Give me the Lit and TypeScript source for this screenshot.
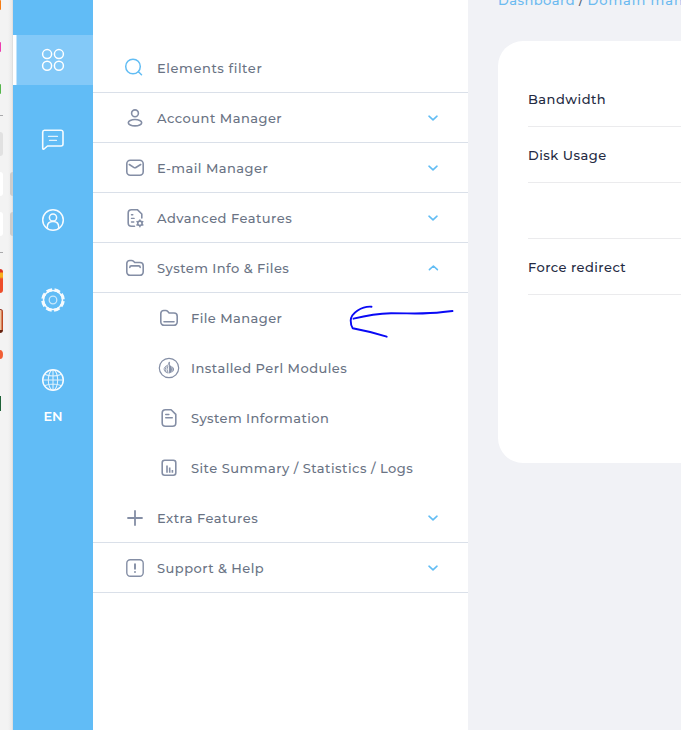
import { LitElement, html, svg, css } from "lit";
import { customElement, property } from "lit/decorators.js";

/** Text run whose tracking is adjusted so that it occupies a given width. */
@customElement("fit-label")
class FitLabel extends LitElement {
  @property() text = "";
  @property({ type: Number }) width = 0;
  static styles = css`
    :host { display: inline-block; white-space: pre; }
  `;
  render() {
    return html`<span>${this.text}</span>`;
  }
  updated() {
    const span = this.renderRoot.querySelector("span")!;
    span.style.letterSpacing = "0px";
    const natural = span.getBoundingClientRect().width;
    span.style.letterSpacing = `${(this.width - natural) / this.text.length}px`;
  }
}

const icons: Record<string, unknown> = {
  grid: svg`<g stroke-width="1.5"><circle cx="6.1" cy="6.1" r="4.5"/><circle cx="17.9" cy="6.1" r="4.5"/><circle cx="6.1" cy="17.7" r="4.5"/><circle cx="17.9" cy="17.7" r="4.5"/></g>`,
  chat: svg`<path stroke-width="1.6" d="M3.5 2.2H20a2 2 0 0 1 2 2V16a2 2 0 0 1-2 2H6.5L3 21q-1.3.5-1.3-1V4.200a2 2 0 0 1 1.8-2z"/><path stroke-width="1.3" opacity=".85" d="M7.500 8.400h9M8.500 12.400h7"/>`,
  user: svg`<g stroke-width="1.5"><circle cx="12" cy="12" r="10.300"/><circle cx="12" cy="9.500" r="3.600"/><path d="M6.300 20.300V19c0-3.400 2.200-5.600 5.700-5.600s5.700 2.200 5.700 5.600v1.300"/></g>`,
  gear: svg`<circle cx="12" cy="12" r="9.500" stroke-width="1.600"/><circle cx="12" cy="12" r="10.300" stroke-width="3" stroke-linecap="butt" stroke-dasharray="5.700 2.390" stroke-dashoffset="-1.195"/><circle cx="12" cy="12" r="3.800" stroke-width="1.300" opacity=".7"/>`,
  globe: svg`<circle cx="12" cy="12" r="10.300" stroke-width="1.500"/><g stroke-width="1.100" opacity=".85"><ellipse cx="12" cy="12" rx="4.700" ry="10.300"/><path d="M1.700 12h20.600M4 6.500q8 3 16 0M4 17.500q8-3 16 0M12 2v20" /></g>`,
  search: svg`<circle cx="10" cy="10.500" r="7.300" stroke-width="1.500"/><path stroke-width="1.500" d="m15.500 15.800 3 3"/>`,
  person: svg`<circle cx="12" cy="7.300" r="3.400"/><ellipse cx="12" cy="16.700" rx="6.700" ry="3.200"/>`,
  mail: svg`<rect x="3.800" y="4.300" width="16.400" height="15" rx="3.500"/><path d="m6.300 8.500 4.400 2.800q1.300.8 2.600 0l4.400-2.800"/>`,
  docgear: svg`<path d="M11.500 20.300H8.500a3.300 3.300 0 0 1-3.300-3.300V7a3.300 3.300 0 0 1 3.300-3.300h5.800l4.500 4.300v4"/><path d="M8.500 8.800h1.300M8.500 12.400h2.600M8.500 16h2.300" stroke-width="1.400"/><circle cx="16.900" cy="17.300" r="2.200" stroke-width="1.600"/><path stroke-width="1.500" d="M16.900 13.900v1M16.900 19.700v1M14 15.600l.8.500M19 18.500l.8.500M14 19l.8-.5M19 16.100l.8-.5"/>`,
  folder: svg`<path d="M3.800 16V7.500a3 3 0 0 1 3-3h1.700q1.200 0 2 .8l1.200 1.200h5.300a3.200 3.200 0 0 1 3.200 3.200V16a3.300 3.300 0 0 1-3.300 3.300H7.100A3.300 3.300 0 0 1 3.800 16z"/><path d="M6.800 11.500q0-1.600 1.500-1.600h7.400q1.500 0 1.500 1.600"/>`,
  folder2: svg`<path d="M3.800 16V7.500a3 3 0 0 1 3-3h2q1.100 0 1.800.8l1.500 1.700h4.900a3.200 3.200 0 0 1 3.200 3.200V16a3.300 3.300 0 0 1-3.300 3.300H7.100A3.300 3.300 0 0 1 3.800 16z"/><path d="M7 15.800h10"/>`,
  perl: svg`<circle cx="12" cy="12" r="9.700" stroke-width="1.200"/><path stroke-width=".9" d="M12.200 6.300q-.6 2.400-1.800 3.200C5.400 11 6.500 16.500 11 17M12.400 6.300v10.700M10.800 10q-1.800 3.400 0 6.300M9 10.900q-1.800 2.400 0 5"/><path fill="currentColor" stroke="none" d="M12.400 8.300q.8 1.500 2.200 2c4 1.600 3.200 6.200-2.200 6.800z"/><path stroke="#fff" stroke-width=".5" d="M14.800 10.500q1.300 3 0 6"/>`,
  doc: svg`<path d="M8.500 3.800h5.600l4.700 4.600V17a3.300 3.300 0 0 1-3.300 3.300h-7A3.300 3.300 0 0 1 5.200 17V7.100a3.300 3.300 0 0 1 3.300-3.300z"/><path d="M8.700 8.500h3.200M8.700 11.800h6.600" stroke-width="1.400"/>`,
  chart: svg`<rect x="5.200" y="4.300" width="13.600" height="15" rx="2.500"/><path stroke-linecap="butt" d="M10 9.600v7.200M12.700 11.400v5.400M15.400 14v2.800"/>`,
  plus: svg`<path stroke-width="1.800" d="M12 5v14M5 12h14"/>`,
  alert: svg`<rect x="3.800" y="3.800" width="16.400" height="16.400" rx="3.500" stroke-width="1.400"/><path stroke-width="1.900" d="M12 8.300v4.500M12 15.900v.1"/>`,
  down: svg`<path stroke-width="1.600" d="m8 10.200 4 3.700 4-3.700"/>`,
  up: svg`<path stroke-width="1.600" d="m8.400 13.700 4-3.700 4 3.700"/>`,
};

const icon = (name: string, cls = "") =>
  html`<svg class="icon ${cls}" viewBox="0 0 24 24" fill="none" stroke="currentColor"
    stroke-width="1.6" stroke-linecap="round" stroke-linejoin="round">${icons[name]}</svg>`;

interface Item { icon: string; text: string; width: number; chevron?: string; sub?: boolean; }

const menu: Item[] = [
  { icon: "search", text: "Elements filter", width: 105.3 },
  { icon: "person", text: "Account Manager", width: 125.2 },
  { icon: "mail", text: "E-mail Manager", width: 111.2 },
  { icon: "docgear", text: "Advanced Features", width: 135.2 },
  { icon: "folder", text: "System Info & Files", width: 132.3, chevron: "up" },
  { icon: "folder2", text: "File Manager", width: 91.4, sub: true },
  { icon: "perl", text: "Installed Perl Modules", width: 156.3, sub: true },
  { icon: "doc", text: "System Information", width: 138.3, sub: true },
  { icon: "chart", text: "Site Summary / Statistics / Logs", width: 222.2, sub: true },
  { icon: "plus", text: "Extra Features", width: 101.2 },
  { icon: "alert", text: "Support & Help", width: 107.2 },
].map((m) => (m.sub || m.icon === "search" || m.chevron ? m : { ...m, chevron: "down" }));

const details = [
  { text: "Bandwidth", width: 78.2 },
  { text: "Disk Usage", width: 78.6 },
  { text: "", width: 0 },
  { text: "Force redirect", width: 98.2 },
];

@customElement("app-root")
class AppRoot extends LitElement {
  static styles = css`
    :host {
      display: flex; position: relative; width: 681px; height: 730px; overflow: hidden;
      background: #f1f2f6; color: #6a7384;
      font: 500 13px/20px Montserrat, Inter, "Liberation Sans", sans-serif;
    }
    .icon { width: 24px; height: 24px; flex: none; display: block; }
    .edge {
      width: 13px; flex: none; display: flex; justify-content: space-between;
      background: linear-gradient(90deg, #f3f3f3 8px, #e9e9e9 12px, #d4d5d6 13px);
    }
    .marks, .tabs { display: flex; flex-direction: column; width: 3px; }
    .marks div { flex: none; }
    .dot { width: 1px; height: 10px; border-radius: 0 1px 1px 0; }
    .orange { background: #f57c14; }
    .pink { margin-top: 32px; background: #ed3daf; }
    .green { margin-top: 32px; background: #55b64c; }
    .rule { height: 1px; background: #a9a9ab; }
    .r1 { margin-top: 21px; }
    .r2 { margin-top: 16px; }
    .tile { height: 24px; border-radius: 0 3px 3px 0; }
    .grey { margin-top: 16px; background: #e1e1e1; }
    .white { margin-top: 16px; background: #fff; }
    .red { margin-top: 16px; background: linear-gradient(#df3522 0 3px, #f8ae20 4px 8px, #ee4e2b 10px); }
    .brown { margin-top: 16px; background: linear-gradient(90deg, #efc5a0 0 1px, #bd4821 2px); border-top: 1px solid #8f2917; border-bottom: 3px solid #65220f; box-sizing: border-box; }
    .ball { margin-top: 17px; height: 9px; border-radius: 0 3px 3px 0 / 0 4.5px 4.5px 0; background: #f15e35; }
    .leaf { margin-top: 37px; height: 15px; width: 1px; background: #1e6238; }
    .tabs { gap: 16px; padding-top: 172px; }
    .tab { height: 24px; background: #cdcdcd; border-radius: 3px 0 0 3px; }

    .rail {
      width: 80px; flex: none; background: #61bcf6; color: #fff; padding-top: 35px;
      box-sizing: border-box; display: flex; flex-direction: column; align-items: center; gap: 30px;
    }
    .slot { height: 50px; width: 80px; display: flex; align-items: center; justify-content: center; opacity: .95; }
    .active {
      background: linear-gradient(90deg, #fff 3px, #c0e3fc 3px 4px, #83c9f8 4px); opacity: 1;
    }
    .lang { font-weight: 600; margin-top: -30px; line-height: 22px; }

    .panel { width: 375px; flex: none; background: #fff; padding-top: 43px; box-sizing: border-box; }
    .row {
      height: 50px; box-sizing: border-box; border-bottom: 1px solid #dae0e9;
      padding: 1px 23px 0 30px; display: flex; align-items: center;
    }
    .row .icon { color: #848ea5; }
    .row .icon.search, .row .icon.chev { color: #62bdf4; }
    .row fit-label { margin-left: 10px; }
    .sub { border-color: transparent; padding-left: 64px; }
    .row .chev { margin-left: auto; }

    .main { flex: 1; min-width: 0; padding-left: 30px; }
    .crumbs { height: 41px; margin-top: -10px; padding-bottom: 10px; white-space: nowrap; color: #6cbaf0; display: flex; gap: 4px; }
    .sep { color: #596173; width: 6px; }
    .card { height: 422px; box-sizing: border-box; width: 240px; background: #fff; border-radius: 25px; padding: 30px 0 0 30px; }
    .line { height: 56px; box-sizing: border-box; border-bottom: 1px solid #ebebed; display: flex; align-items: center; padding-top: 1px; color: #242a42; }

    .arrow { position: absolute; left: 345px; top: 300px; width: 115px; height: 42px; }
  `;

  render() {
    return html`
      <div class="edge">
        <div class="marks">
          <div class="dot orange"></div><div class="dot pink"></div><div class="dot green"></div>
          <div class="rule r1"></div><div class="tile grey"></div>
          <div class="tile white"></div><div class="tile white"></div>
          <div class="rule r2"></div>
          <div class="tile red"></div><div class="tile brown"></div>
          <div class="ball"></div><div class="leaf"></div>
        </div>
        <div class="tabs"><div class="tab"></div><div class="tab"></div></div>
      </div>
      <nav class="rail">
        ${["grid", "chat", "user", "gear", "globe"].map(
          (n, i) => html`<div class="slot ${i === 0 ? "active" : ""}">${icon(n)}</div>`
        )}
        <fit-label class="lang" text="EN" .width=${19}></fit-label>
      </nav>
      <div class="panel">
        ${menu.map((m) => html`
          <div class="row ${m.sub ? "sub" : ""}">
            ${icon(m.icon, m.icon)}
            <fit-label .text=${m.text} .width=${m.width}></fit-label>
            ${m.chevron ? icon(m.chevron, "chev") : ""}
          </div>`)}
      </div>
      <main class="main">
        <div class="crumbs">
          <fit-label text="Dashboard" .width=${77}></fit-label>
          <span class="sep">/</span>
          <fit-label text="Domain manager" .width=${130}></fit-label>
        </div>
        <section class="card">
          ${details.map((d) => html`<div class="line">${d.text
            ? html`<fit-label .text=${d.text} .width=${d.width}></fit-label>` : ""}</div>`)}
        </section>
      </main>
      <svg class="arrow" viewBox="345 300 115 42" fill="none" stroke="#0909f5" stroke-width="1.900" stroke-linecap="round" stroke-linejoin="round">
        <path d="M371.500 306.700C362 306 351 313 350.700 320.500q0 5 2 7.800l17.500 3.700 16.500 4.700"/>
        <path d="M353.500 318.700Q374 313.500 391 313.200C413 313.200 423 314.500 443 312l9.500-1"/>
      </svg>
    `;
  }
}
